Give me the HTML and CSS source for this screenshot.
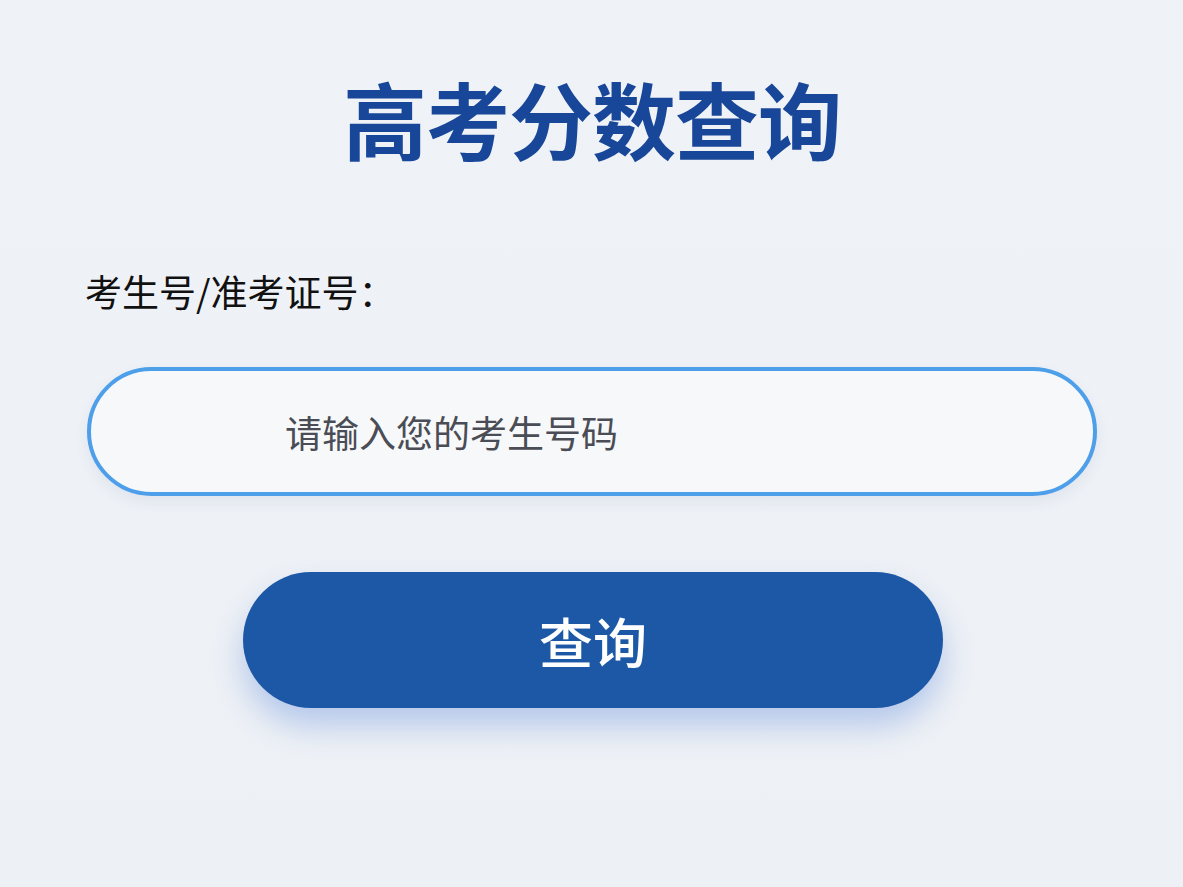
FILE: index.html
```html
<!DOCTYPE html>
<html lang="zh-CN">
<head>
<meta charset="utf-8">
<title>高考分数查询</title>
<link rel="stylesheet" href="styles.css">
</head>
<body>
<main class="page">
  <h1 class="title">高考分数查询</h1>
  <form class="form">
    <label class="label" for="sid">考生号/准考证号：</label>
    <input class="field" id="sid" type="text" placeholder="请输入您的考生号码">
    <button class="btn" type="button">查询</button>
  </form>
</main>
</body>
</html>
```
FILE: styles.css
```css
* { box-sizing: border-box; }
html, body { margin: 0; padding: 0; }
body {
  width: 1183px;
  height: 887px;
  overflow: hidden;
  background: linear-gradient(180deg, #eff2f7 0%, #edf0f5 100%);
  font-family: "Noto Sans CJK SC", "Noto Sans", sans-serif;
}
.page {
  display: flex;
  flex-direction: column;
  align-items: center;
  padding: 76px 86px 0 87px;
}
.title {
  margin: 0;
  font-size: 84px;
  line-height: 1;
  font-weight: 700;
  color: #18479a;
  letter-spacing: -1px;
}
.form {
  width: 100%;
  display: flex;
  flex-direction: column;
  margin-top: 113px;
}
.label {
  margin-left: -2px;
  font-size: 37px;
  line-height: 1;
  font-weight: 400;
  color: #111;
}
.field {
  margin-top: 57px;
  width: 100%;
  height: 129px;
  border: 4px solid #4d9fe9;
  border-radius: 65px;
  background: #f7f8fa;
  padding: 0 0 0 194px;
  font-family: inherit;
  font-size: 37px;
  color: #333;
  outline: none;
  box-shadow: 0 6px 14px rgba(60, 90, 140, 0.08);
}
.field::placeholder { color: #4a4d55; }
.btn {
  align-self: center;
  margin-top: 76px;
  margin-left: 2px;
  width: 700px;
  height: 136px;
  border: none;
  border-radius: 68px;
  background: #1c58a6;
  color: #ffffff;
  font-family: inherit;
  font-size: 54px;
  font-weight: 500;
  box-shadow: 0 18px 30px rgba(40, 100, 210, 0.28);
}
```
